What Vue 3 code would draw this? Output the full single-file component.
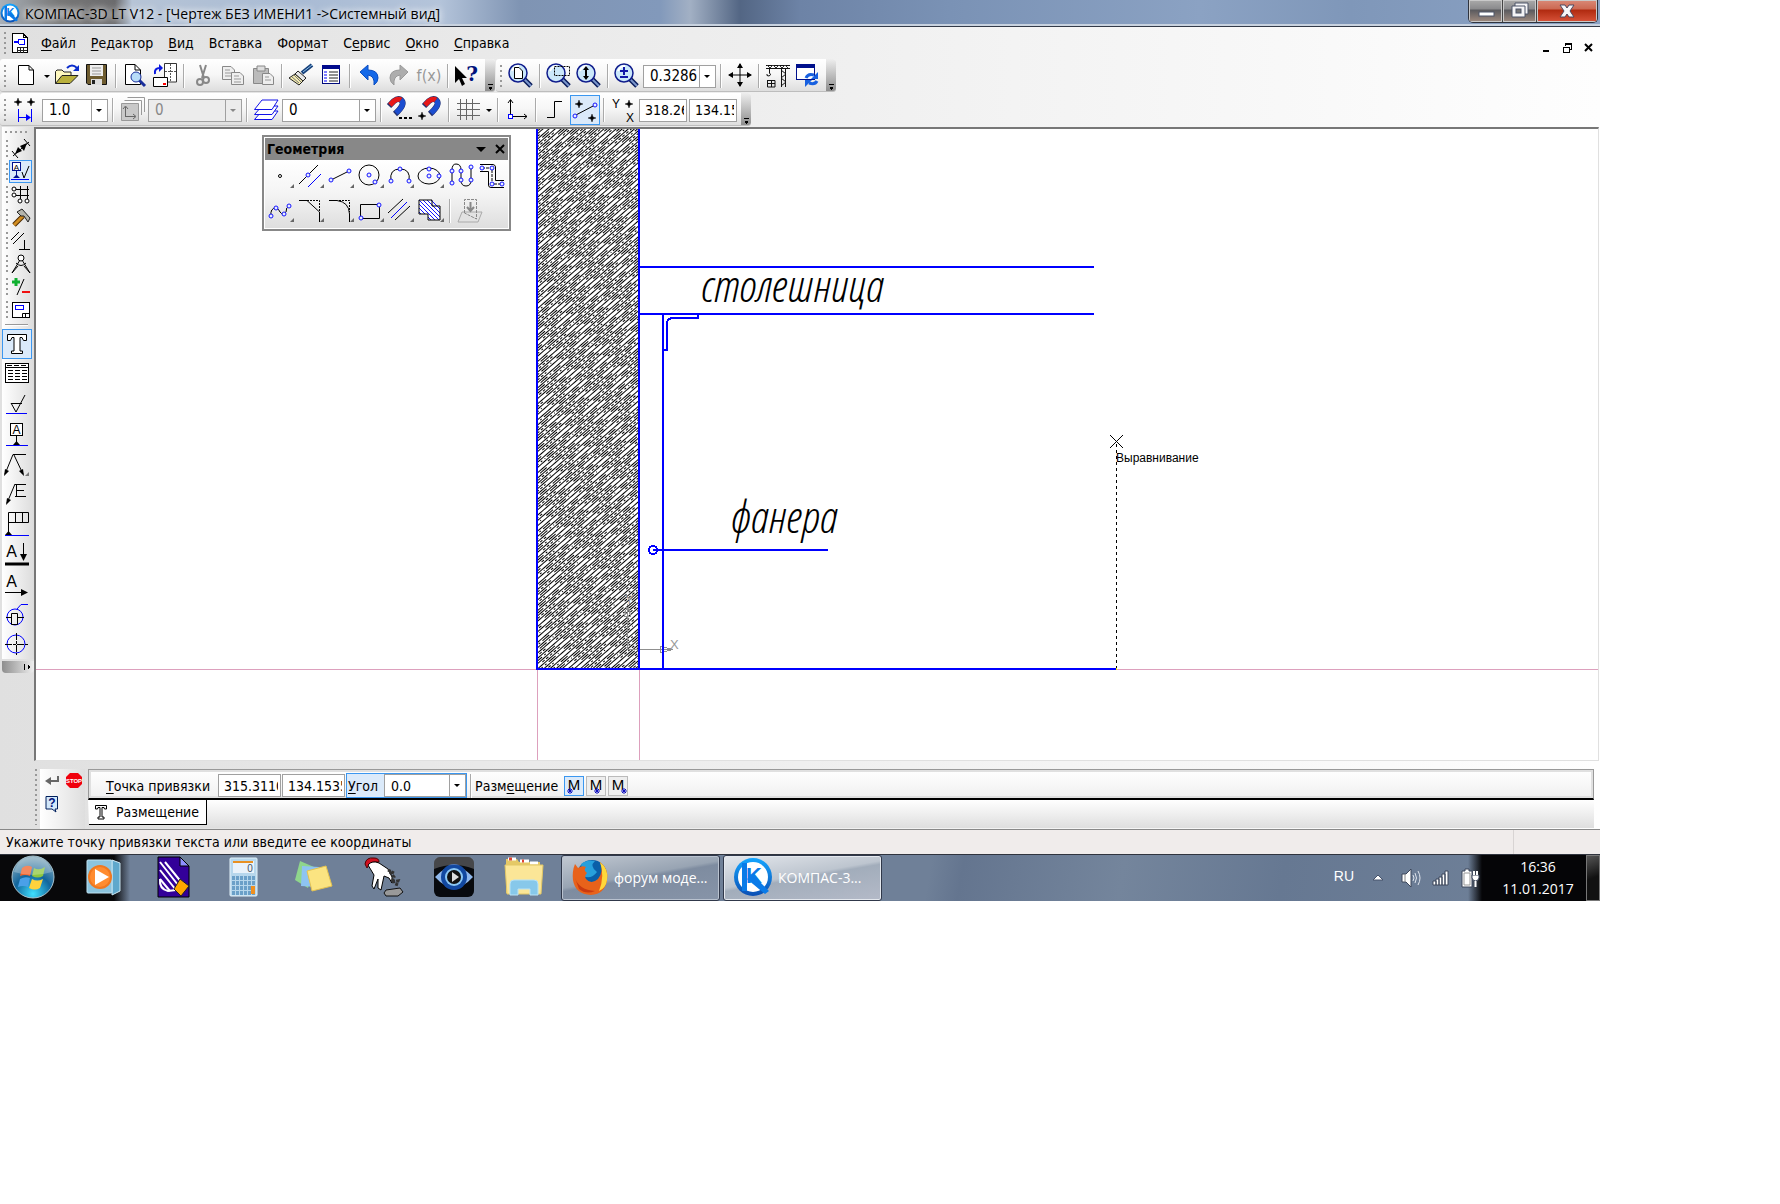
<template>
  <div class="window">
    <header class="titlebar">
      <svg class="titlebar__logo" width="20" height="20" viewBox="0 0 40 40" v-html="kompasLogo"></svg>
      <h1 class="titlebar__text">КОМПАС-3D LT V12 - [Чертеж БЕЗ ИМЕНИ1 -&gt;Системный вид]</h1>
      <div class="titlebar__controls">
        <button class="control" type="button" aria-label="Свернуть">
          <svg width="20" height="20"><rect x="3" y="11" width="15" height="4" fill="#fff" stroke="#4c5468" /></svg>
        </button>
        <button class="control" type="button" aria-label="Развернуть">
          <svg width="20" height="20">
            <path d="M5 2H18V13H15V16H2V5H5Z" fill="#f4f4f6" stroke="#4c5468" />
            <path d="M5 5H15V13" fill="none" stroke="#4c5468" />
            <rect x="6" y="8" width="5" height="4" fill="#777" stroke="#4c5468" />
          </svg>
        </button>
        <button class="control control--close" type="button" aria-label="Закрыть">
          <svg width="20" height="20">
            <path d="M3 4H8L10 7L12 4H17L13 10L17 16H12L10 13L8 16H3L7 10Z" fill="#f6f6f8" stroke="#4c4860" />
          </svg>
        </button>
      </div>
    </header>

    <nav class="menu">
      <i class="grip"></i>
      <svg class="menu__icon" width="18" height="22" shape-rendering="crispEdges">
        <path d="M1.500 1.500H12L16.500 6V20.500H1.500Z" fill="#fff" stroke="#000" />
        <path d="M12.500 1V5.500H17" fill="none" stroke="#000" />
        <path d="M3 9.500H7M7.500 7V12M8 7.500H13V12.500H8M3 10.500H8" fill="none" stroke="#00f" />
        <path d="M6 15.500H16M6 18.500H16M6.500 15V21M9.500 15V21M12.500 15V21" fill="none" stroke="#222" />
      </svg>
      <button v-for="item in menu" :key="item[1] + item[2]" class="menu__item" type="button">{{ item[0] }}<u>{{ item[1] }}</u>{{ item[2] }}</button>
      <div class="menu__doc">
        <button type="button" aria-label="Свернуть документ">
          <svg width="12" height="12"><path d="M3 9H9" stroke="#000" stroke-width="2" /></svg>
        </button>
        <button type="button" aria-label="Восстановить документ">
          <svg width="12" height="12" shape-rendering="crispEdges">
            <path d="M4 4V2H10V7H8M4 1.500H11M2 5H8V10H2ZM1.500 5H8" fill="none" stroke="#000" stroke-width="1" />
          </svg>
        </button>
        <button type="button" aria-label="Закрыть документ">
          <svg width="12" height="12"><path d="M3 2L10 9M10 2L3 9" stroke="#000" stroke-width="2" /></svg>
        </button>
      </div>
    </nav>

    <div class="toolbars">
      <div class="toolbar-row">
        <div class="toolbar">
          <i class="grip"></i>
          <template v-for="(tool, i) in standardTools" :key="i">
            <i v-if="tool === '|'" class="separator"></i>
            <button v-else-if="tool === 'v'" class="arrow" type="button" aria-label="Ещё"></button>
            <button v-else class="tool" type="button" :aria-label="tool.label">
              <svg width="30" height="28" v-html="tool.svg"></svg>
            </button>
          </template>
          <i class="tail"></i>
        </div>
        <div class="toolbar toolbar--view">
          <i class="grip"></i>
          <button v-for="tool in viewTools.slice(0, 1)" :key="tool.label" class="tool" type="button" :aria-label="tool.label">
            <svg width="30" height="28" v-html="tool.svg"></svg>
          </button>
          <i class="separator"></i>
          <button v-for="tool in viewTools.slice(1, 3)" :key="tool.label" class="tool" type="button" :aria-label="tool.label">
            <svg width="30" height="28" v-html="tool.svg"></svg>
          </button>
          <i class="separator"></i>
          <button class="tool" type="button" :aria-label="viewTools[3].label">
            <svg width="30" height="28" v-html="viewTools[3].svg"></svg>
          </button>
          <span class="combo combo--zoom">
            <select aria-label="Масштаб"><option>0.3286</option></select>
          </span>
          <i class="separator"></i>
          <button class="tool" type="button" :aria-label="viewTools[4].label">
            <svg width="30" height="28" v-html="viewTools[4].svg"></svg>
          </button>
          <i class="separator"></i>
          <button v-for="tool in viewTools.slice(5)" :key="tool.label" class="tool" type="button" :aria-label="tool.label">
            <svg width="30" height="28" v-html="tool.svg"></svg>
          </button>
          <i class="tail"></i>
        </div>
      </div>

      <div class="toolbar-row">
        <div class="toolbar">
          <i class="grip"></i>
          <button class="tool" type="button" aria-label="Шаг курсора"><svg width="30" height="28" v-html="stateIcons.step"></svg></button>
          <span class="combo combo--step"><select aria-label="Шаг"><option>1.0</option></select></span>
          <i class="separator"></i>
          <button class="tool" type="button" disabled aria-label="Виды"><svg width="30" height="28" v-html="stateIcons.views"></svg></button>
          <span class="combo combo--wide combo--disabled"><select disabled aria-label="Текущий вид"><option>0</option></select></span>
          <i class="separator"></i>
          <button class="tool" type="button" aria-label="Слои"><svg width="30" height="28" v-html="stateIcons.layers"></svg></button>
          <span class="combo combo--wide"><select aria-label="Текущий слой"><option>0</option></select></span>
          <i class="separator"></i>
          <button class="tool" type="button" aria-label="Настройка привязок"><svg width="30" height="28" v-html="stateIcons.magnet"></svg></button>
          <button class="tool" type="button" aria-label="Запретить привязки"><svg width="30" height="28" v-html="stateIcons.magnetOff"></svg></button>
          <i class="separator"></i>
          <button class="tool" type="button" aria-label="Сетка"><svg width="30" height="28" v-html="stateIcons.grid"></svg></button>
          <button class="arrow" type="button" aria-label="Параметры сетки"></button>
          <i class="separator"></i>
          <button class="tool" type="button" aria-label="Локальная СК"><svg width="30" height="28" v-html="stateIcons.axes"></svg></button>
          <i class="separator"></i>
          <button class="tool" type="button" aria-label="Ортогональное черчение"><svg width="30" height="28" v-html="stateIcons.ortho"></svg></button>
          <button class="tool tool--active" type="button" aria-label="Округление"><svg width="30" height="28" v-html="stateIcons.snap"></svg></button>
          <i class="separator"></i>
          <svg width="30" height="28" v-html="stateIcons.coords"></svg>
          <input class="field field--coord" value="318.2653" aria-label="Координата X" />
          <input class="field field--coord" value="134.1535" aria-label="Координата Y" />
          <i class="tail"></i>
        </div>
      </div>
    </div>

    <main class="workspace">
      <aside class="side">
        <i class="side__dots"></i>
        <div v-for="(tool, i) in panels" :key="tool.label" class="side__row">
          <i class="side__grip"></i>
          <button class="panel-btn" :class="{ 'panel-btn--active': i === 1 }" type="button" :aria-label="tool.label">
            <svg width="21" height="21" v-html="tool.svg"></svg>
          </button>
        </div>
        <i class="side__line"></i>
        <button
          v-for="(tool, i) in notation"
          :key="tool.label"
          class="note-btn"
          :class="{ 'note-btn--active': i === 0 }"
          type="button"
          :aria-label="tool.label"
        >
          <svg width="30" height="30" v-html="tool.svg"></svg>
        </button>
        <i class="side__tail"></i>
      </aside>

      <section class="canvas">
        <svg class="drawing" width="100%" height="631">
          <defs>
            <pattern id="hatch" width="37" height="28" patternUnits="userSpaceOnUse" patternTransform="rotate(-41)" shape-rendering="crispEdges">
              <rect width="37" height="28" fill="#fff" />
              <path d="M0 1H37M0 5H37M0 9H37M0 13H37M0 17H37M0 21H37M0 25H37" stroke="#000" stroke-width="1" />
              <path d="M2 3H37M6 11H34M0 19H30M9 27H37" stroke="#000" stroke-width="1" stroke-dasharray="9 3 2 3" />
              <path d="M0 7H24M12 15H37M3 23H20" stroke="#000" stroke-width="1" stroke-dasharray="3 2" />
            </pattern>
          </defs>
          <g transform="translate(-36 -129)" shape-rendering="crispEdges" fill="none">
            <path d="M36 669.500H537M1117 669.500H4000M537.500 670V800M639.500 670V800" stroke="#dda0bd" />
            <rect x="538" y="120" width="101" height="549" fill="url(#hatch)" />
            <g stroke="#8f8f8f">
              <path d="M627.500 649V607M627 649.500H671" />
              <path d="M627.500 604L624.500 616H630.500ZM673 649.500L660.500 646.500V652.500Z" />
            </g>
            <g stroke="#00f" stroke-width="2">
              <path d="M537 120V670M639 120V669M536 669H1116" />
              <path d="M640 267H1094M640 314H1094M663 314V669" />
              <path d="M664 350H667V324Q667 318 673 318H698V314" />
              <circle cx="653" cy="550" r="4" />
              <path d="M653 550H828" />
            </g>
            <path d="M1116.500 444V668" stroke="#000" stroke-dasharray="3 3" />
            <rect x="1116" y="668" width="1" height="2" fill="#ee0" />
            <path d="M1110 435L1123 448M1123 435L1110 448" stroke="#000" shape-rendering="auto" />
          </g>
          <g transform="translate(-36 -129)">
            <text class="drawing__note" x="700" y="302">столешница</text>
            <text class="drawing__note" x="730" y="533">фанера</text>
            <text class="drawing__hint" x="1116" y="462">Выравнивание</text>
            <text class="drawing__axis" x="670" y="649">X</text>
            <text class="drawing__axis" x="625" y="604">Y</text>
          </g>
        </svg>

        <section class="palette">
          <header class="palette__head">
            <h2>Геометрия</h2>
            <button type="button" aria-label="Меню панели"><svg width="12" height="12"><path d="M1 4H11L6 9Z" /></svg></button>
            <button type="button" aria-label="Закрыть панель"><svg width="12" height="12"><path d="M2 2L10 10M10 2L2 10" stroke="#000" stroke-width="2" /></svg></button>
          </header>
          <div class="palette__grid">
            <template v-for="tool in geometry" :key="tool.label">
              <button class="palette__tool" type="button" :aria-label="tool.label">
                <svg width="30" height="34" v-html="tool.svg"></svg>
              </button>
            </template>
            <i class="separator separator--palette"></i>
            <button class="palette__tool" type="button" disabled aria-label="Спроецировать">
              <svg width="30" height="34" v-html="projection"></svg>
            </button>
          </div>
        </section>
      </section>
    </main>

    <section class="props">
      <i class="grip grip--tall"></i>
      <div class="props__side">
        <button type="button" aria-label="Создать объект">
          <svg width="18" height="18"><path d="M15 4V9H5" fill="none" stroke="#666" stroke-width="2" /><path d="M2 9L8 5V13Z" fill="#666" /></svg>
        </button>
        <button type="button" aria-label="Прервать команду">
          <svg width="18" height="18">
            <path d="M5 1H13L17 5V12L13 16H5L1 12V5Z" fill="#f0000c" />
            <text x="9" y="11" font-family="Liberation Sans, sans-serif" font-size="6" font-weight="bold" fill="#fff" text-anchor="middle">STOP</text>
          </svg>
        </button>
        <button type="button" aria-label="Справка">
          <svg width="18" height="18">
            <path d="M3 1.500H14.500V14H12L13 17L9 14H3Z" fill="#d3e8fa" stroke="#001f5c" />
            <text x="9" y="12" font-family="Liberation Sans, sans-serif" font-size="12" font-weight="bold" fill="#00127a" text-anchor="middle">?</text>
          </svg>
        </button>
      </div>
      <div class="props__body">
        <div class="props__line">
          <label class="props__label" for="px"><u>Т</u>очка привязки</label>
          <input id="px" class="field field--point" value="315.3110" />
          <input class="field field--point" value="134.1535" aria-label="Точка привязки Y" />
          <span class="angle">
            <label for="angle"><u>У</u>гол</label>
            <span class="combo combo--angle"><select id="angle"><option>0.0</option></select></span>
          </span>
          <i class="separator"></i>
          <span class="props__place">Разм<u>е</u>щение</span>
          <button
            v-for="(x, i) in [5, 10, 15]"
            :key="x"
            class="align"
            :class="{ 'align--active': i === 0 }"
            type="button"
            :aria-label="['Слева', 'По центру', 'Справа'][i]"
          >
            <svg width="18" height="18">
              <text x="9" y="13" font-family="Liberation Sans, sans-serif" font-size="15" text-anchor="middle">M</text>
              <path :d="`M${x - 2} 12L${x + 2} 16M${x + 2} 12L${x - 2} 16M${x} 11V17M${x - 3} 14H${x + 3}`" stroke="#1010c0" />
            </svg>
          </button>
        </div>
        <div class="props__tabs">
          <button class="tab" type="button">
            <svg width="14" height="16" viewBox="0 0 28 32">
              <path d="M3 3H25V10H21L20 7H16V26H20V30H8V26H12V7H8L7 10H3Z" fill="#fff" stroke="#000" stroke-width="2" />
            </svg>
            Размещение
          </button>
        </div>
      </div>
    </section>

    <div class="status">
      <p>Укажите точку привязки текста или введите ее координаты</p>
    </div>

    <footer class="taskbar">
      <button class="start" type="button" aria-label="Пуск"><svg width="46" height="46" v-html="orb"></svg></button>
      <button v-for="app in apps" :key="app.label" class="pinned" type="button" :aria-label="app.label">
        <svg width="44" height="44" v-html="app.svg"></svg>
      </button>
      <button class="task" type="button">
        <svg width="38" height="38" v-html="firefox"></svg>
        <span>форум моде...</span>
      </button>
      <button class="task task--active" type="button">
        <svg width="40" height="40" v-html="kompasLogo"></svg>
        <span>КОМПАС-3...</span>
      </button>
      <div class="tray">
        <span class="tray__lang">RU</span>
        <svg class="tray__more" width="12" height="12"><path d="M1 8L6 3L11 8Z" fill="#fff" stroke="#46526a" /></svg>
        <svg width="22" height="22">
          <path d="M2 7H6L11 2V20L6 15H2Z" fill="#fff" stroke="#3c465a" />
          <path d="M5 7V15" stroke="#888" />
          <path d="M13 8Q15 11 13 14M15 6Q18 11 15 16M18 4Q22 11 18 18" fill="none" stroke="#dfe5ee" />
        </svg>
        <svg width="18" height="18">
          <path d="M1 12H4V16H1ZM4 10H7V16H4ZM7 8H10V16H7ZM10 5H13V16H10ZM13 2H16V16H13Z" fill="#fff" stroke="#3c465a" />
        </svg>
        <svg width="20" height="22">
          <path d="M2 4H5V2H9V4H12V20H2Z" fill="#fff" stroke="#3c465a" />
          <path d="M4 6H10V18H4Z" fill="none" stroke="#999" />
          <path d="M12 8H19V11Q18 14 15.500 14Q13 14 12 11Z" fill="#fff" stroke="#3c465a" />
          <path d="M14 4V8M17 4V8M15.500 14V20" stroke="#fff" stroke-width="2" />
        </svg>
        <time class="clock"><span>16:36</span><span>11.01.2017</span></time>
        <button class="peek" type="button" aria-label="Показать рабочий стол"></button>
      </div>
    </footer>
  </div>
</template>

<script setup>
  const menu = [
    ['', 'Ф', 'айл'],
    ['', 'Р', 'едактор'],
    ['', 'В', 'ид'],
    ['Вст', 'а', 'вка'],
    ['Фор', 'м', 'ат'],
    ['С', 'е', 'рвис'],
    ['', 'О', 'кно'],
    ['', 'С', 'правка'],
  ];

  const kompasLogo = `
    <defs><linearGradient id="kl" x1="0" y1="0" x2="0" y2="1"><stop offset="0" stop-color="#15a6ff"/><stop offset="1" stop-color="#0b4fb4"/></linearGradient></defs>
    <circle cx="20" cy="20" r="19" fill="url(#kl)"/>
    <circle cx="20" cy="20" r="15" fill="#fff"/>
    <path d="M9 6H14V34H9ZM20 18L36 34L32 37L14 22Z" fill="#0a7be8"/>
    <text x="21" y="26" font-family="Liberation Sans, sans-serif" font-size="22" font-weight="bold" fill="#0a7be8" text-anchor="middle">K</text>`;

  // Magnifier shared by every zoom command
  const lens = (inner) => `
    <path d="M18 17L25 24" stroke="#0a1c5c" stroke-width="5"/>
    <path d="M18 17L25 24" stroke="#7b97cc" stroke-width="2"/>
    <circle cx="12" cy="11" r="9" fill="#cbe8fa" stroke="#101c8c" stroke-width="1.500"/>
    <path d="M6 9Q8 4 13 4" stroke="#fff" stroke-width="2" fill="none"/>${inner}`;

  const line = (d, color = '#000', width = 1) => `<path d="${d}" fill="none" stroke="${color}" stroke-width="${width}"/>`;
  const dot = (x, y) => `<circle cx="${x}" cy="${y}" r="2" fill="#e8eeff" stroke="#1515ff"/>`;
  const letter = (char, x, y, size) =>
    `<text x="${x}" y="${y}" font-family="Liberation Sans, sans-serif" font-size="${size}" text-anchor="middle">${char}</text>`;

  const standardTools = [
    { label: 'Создать', svg: '<path d="M7.500 3.500H18L22.500 8V22.500H7.500Z" fill="#fff" stroke="#000"/><path d="M18 3.500V8H22.500" fill="none" stroke="#000"/>' },
    'v',
    { label: 'Открыть', svg: '<path d="M3.500 21.500V9.500L5 8H10L12 10H19V13" fill="#fff9c0" stroke="#222"/><path d="M3.500 21.500L10 13.500H26L18 21.500Z" fill="#b9b03c" stroke="#222"/><path d="M15 6Q20 1 25 6" fill="none" stroke="#0a2ccc" stroke-width="2"/><path d="M27 3V9H21Z" fill="#0a2ccc"/>' },
    { label: 'Сохранить', svg: '<path d="M4.500 2.500H24.500V22.500H6L4.500 21Z" fill="#6e5c30" stroke="#111"/><rect x="8" y="3" width="13" height="11" fill="#eee"/><path d="M10 6H19M10 9H19M10 12H19" stroke="#999"/><rect x="9" y="17" width="11" height="6" fill="#ddd"/><rect x="10" y="18" width="3" height="4" fill="#222"/>' },
    '|',
    { label: 'Предварительный просмотр', svg: '<path d="M5.500 2.500H15L20.500 8V22.500H5.500Z" fill="#fff" stroke="#000"/><path d="M15 2.500V8H20.500" fill="none" stroke="#000"/><path d="M19 18L25 24" stroke="#1a2f9c" stroke-width="3"/><circle cx="16" cy="15" r="5" fill="#b8dcf8" stroke="#1a2f9c"/>' },
    { label: 'Печать', svg: '<path d="M14.500 1.500H26.500V20H14.500Z" fill="#fff" stroke="#333"/><path d="M20.500 2V19M15 9.500H26" stroke="#555" stroke-dasharray="2 1"/><path d="M3.500 15.500H17.500V24.500H3.500Z" fill="#fff" stroke="#000"/><path d="M13 22H16" stroke="red" stroke-width="2"/><path d="M5 12Q4 6 10 6" fill="none" stroke="#0a18e0" stroke-width="2"/><path d="M9 2V10L13 6Z" fill="#0a18e0"/>' },
    '|',
    { label: 'Вырезать', svg: '<path d="M12 3L16 16M18 3L14 16" stroke="#888" stroke-width="2"/><circle cx="12" cy="20" r="3" fill="none" stroke="#888" stroke-width="2"/><circle cx="18" cy="18" r="3" fill="none" stroke="#888" stroke-width="2"/>' },
    { label: 'Копировать', svg: '<path d="M4.500 4.500H13L16.500 8V17.500H4.500Z" fill="#eee" stroke="#888"/><path d="M7 8H12M7 11H14M7 14H14" stroke="#999"/><path d="M13.500 10.500H22L25.500 14V22.500H13.500Z" fill="#eee" stroke="#888"/><path d="M16 14H21M16 17H23M16 20H23" stroke="#999"/>' },
    { label: 'Вставить', svg: '<path d="M5.500 6.500H20.500V21.500H5.500Z" fill="#bbb" stroke="#888"/><path d="M9 4H17V9H9Z" fill="#ddd" stroke="#888"/><path d="M14.500 11.500H22L25.500 15V22.500H14.500Z" fill="#eee" stroke="#888"/><path d="M17 15H21M17 18H23" stroke="#999"/>' },
    '|',
    { label: 'Копировать свойства', svg: '<path d="M16 11L26 3" stroke="#16407a" stroke-width="4"/><path d="M17 10L26 3" stroke="#8fc0ea" stroke-width="1"/><path d="M12 9L20 16L17 19L9 12Z" fill="#e8e8e8" stroke="#222"/><path d="M9 12L17 19L13 23L3 16Z" fill="#f4ecb0" stroke="#222"/><path d="M6 15L13 21M8 13L15 20" stroke="#777"/>' },
    { label: 'Свойства', svg: '<rect x="6.500" y="3.500" width="17" height="18" fill="#fff" stroke="#000a7c"/><rect x="6" y="3" width="18" height="4" fill="#000a8c"/><path d="M8 10H11M8 13H11M8 16H11M8 19H11" stroke="#00f"/><path d="M13 10H22M13 13H22M13 16H22M13 19H22" stroke="#222"/>' },
    '|',
    { label: 'Отменить', svg: '<path d="M6 10L14 3V8Q24 8 24 16Q24 20 20 23Q21 14 14 13V18Z" fill="#1468e8" stroke="#0a4cc0"/>' },
    { label: 'Повторить', svg: '<path d="M24 10L16 3V8Q6 8 6 16Q6 20 10 23Q9 14 16 13V18Z" fill="#adadad" stroke="#999"/>' },
    { label: 'Переменные', svg: '<text x="15" y="19" font-family="DejaVu Sans Condensed, sans-serif" font-size="16" fill="#989898" text-anchor="middle">f(x)</text>' },
    '|',
    { label: 'Справка', svg: '<path d="M3 4V21L7 17L10 24L13 22L10 16H15Z" fill="#000"/><text x="20" y="19" font-family="DejaVu Serif, serif" font-size="20" font-weight="bold" fill="#00127c" text-anchor="middle">?</text>' },
  ];

  const viewTools = [
    { label: 'Масштаб по листу', svg: lens('<path d="M8.500 5.500H13L16.500 9V16.500H8.500Z" fill="#fff" stroke="#000"/>') },
    { label: 'Увеличить рамкой', svg: lens('<path d="M10.500 4.500H25.500V13.500H10.500Z" fill="none" stroke="#000" stroke-dasharray="2 1"/>') },
    { label: 'Приблизить', svg: lens('<path d="M12 6V16" stroke="#000" stroke-width="2"/><path d="M12 4L15 8H9ZM12 18L15 14H9Z" fill="#000"/>') },
    { label: 'Масштаб', svg: lens('<path d="M12 5V13M8 9H16M8 15H16" stroke="#1218a8" stroke-width="2"/>') },
    { label: 'Сдвинуть', svg: `${line('M15 2V24M4 13H26', '#000', 1)}<path d="M15 1L18 6H12ZM15 25L18 20H12ZM3 13L8 10V16ZM27 13L22 10V16Z"/>` },
    { label: 'Перестроить', svg: `${line('M3 3.500H27M3 6.500H27', '#111', 1)}${line('M4 3L7 6L10 3L13 6L16 3L19 6L22 3L25 6', '#333')}${line('M18.500 6V25M22.500 6V25M18 8L23 12L18 16L23 20L18 24', '#111')}${line('M6.500 7V11Q9 13 6 14Q3 14 4 12', '#111')}${line('M4 18.500H12V25H4.500V18M8.500 18V25M4 21.500H12', '#111')}` },
    { label: 'Обновить изображение', svg: '<rect x="3.500" y="2.500" width="18" height="15" fill="#fff" stroke="#00108c"/><rect x="3" y="2" width="19" height="4" fill="#00108c"/><path d="M13 16Q15 11 21 13" fill="none" stroke="#1760e0" stroke-width="3"/><path d="M25 10V17H18Z" fill="#1760e0"/><path d="M24 19Q22 23 16 21" fill="none" stroke="#1760e0" stroke-width="3"/><path d="M12 25V18H19Z" fill="#1760e0"/>' },
  ];

  const star = (x, y) =>
    `<path d="M${x} ${y - 4}L${x + 1} ${y - 1}L${x + 4} ${y}L${x + 1} ${y + 1}L${x} ${y + 4}L${x - 1} ${y + 1}L${x - 4} ${y}L${x - 1} ${y - 1}Z" fill="#000" stroke="#000" stroke-width=".4"/>`;
  const horseshoe = '<path d="M4 10L9 5Q14 1 17 5Q20 9 10 18" fill="none" stroke="#22306e" stroke-width="6"/><path d="M5 9L9 5Q13 2 16 4" fill="none" stroke="#e81818" stroke-width="5"/><path d="M16 4Q21 8 11 17" fill="none" stroke="#1c4ed0" stroke-width="5"/>';

  const stateIcons = {
    step: `${star(7, 6)}${star(20, 6)}${line('M7.500 13V26M20.500 13V26M8 21.500H18', '#00f')}<path d="M20 21.500L15 18V25Z" fill="#00f"/>`,
    views: '<path d="M10.500 1.500H27.500V16M7.500 4.500H24.500V19" fill="none" stroke="#999"/><path d="M4.500 7.500H21.500V24.500H4.500Z" fill="#c9c9c9" stroke="#999"/><path d="M8.500 20V11M8 20.500H18M6 13L8.500 10L11 13M16 18L19 20.500L16 23" fill="none" stroke="#666"/>',
    layers: `<g fill="#fff" stroke="#1212e8"><path d="M3.500 23.500L11 15H27L21 23.500Z"/><path d="M3.500 18.500L11 10H27L21 18.500Z"/><path d="M3.500 13.500L11 4H27L21 13.500Z"/></g>`,
    magnet: `${horseshoe}<path d="M14 21H17V23H14ZM19 21H22V23H19ZM24 21H27V23H24Z"/>`,
    magnetOff: `<g transform="translate(5 0)">${horseshoe}</g>${star(7, 20)}`,
    grid: line('M7.500 3V24M13.500 3V24M19.500 3V24M4 7.500H27M4 13.500H27M4 19.500H27', '#666'),
    axes: `${line('M8.500 18V4M10 20.500H25M6 7L8.500 3.500L11 7M22 18L25 20.500L22 23')}<rect x="6.500" y="18.500" width="4" height="4" fill="#fff" stroke="#00f"/>`,
    ortho: line('M7 21.500H14.500V5.500H22'),
    snap: `${line('M4 20L25 9')}${dot(5, 20)}${dot(25, 9)}${star(9, 8)}${star(22, 22)}`,
    coords: `${letter('Y', 8, 12, 12)}${letter('X', 22, 26, 12)}${star(21, 8)}`,
  };

  const panels = [
    { label: 'Размеры', svg: `${line('M3 18L19 4M2 13L8 20M14 1L20 8')}<path d="M5 16L12 13L8 9ZM17 5L10 8L14 13Z"/>` },
    { label: 'Обозначения', svg: `<rect x="2.500" y="1.500" width="8" height="8" fill="#fff" stroke="#00108c"/>${letter('A', 6.500, 9, 8)}<path d="M6 10H7V14L10 17H3L6 14Z" fill="#00108c"/>${line('M1 18.500H19', '#00f')}${line('M12 11L14 17L19 5')}` },
    { label: 'Параметризация', svg: `${line('M6 5.500H19M6 11.500H19M10.500 2V15M17.500 2V15')}<g fill="#fff" stroke="#000"><circle cx="4" cy="5" r="2"/><circle cx="4" cy="11" r="2"/><circle cx="10" cy="17" r="2"/><circle cx="17" cy="17" r="2"/></g>` },
    { label: 'Редактирование', svg: '<path d="M4 18L13 9" stroke="#4c2a00" stroke-width="5"/><path d="M4 18L13 9" stroke="#d08c20" stroke-width="3"/><path d="M7 5L12 2L20 11L18 15L14 9L11 9Z" fill="#b5b5ac" stroke="#222"/>' },
    { label: 'Измерения', svg: line('M1 10L9 2M3 14L14 3M14.500 10V19M9 19.500H20') },
    { label: 'Чертёжные приёмы', svg: `${line('M10 7L2 20L8 13M12 7L20 20L14 13M6 10Q11 15 16 10')}<circle cx="11" cy="5" r="3" fill="#fff" stroke="#000"/>` },
    { label: 'Спецификация', svg: `${line('M2 6H10M6 2V10', '#10b030', 3)}${line('M7 19L14 3')}${line('M12 16H20', '#f01010', 2)}` },
    { label: 'Отчёты', svg: `<rect x="2.500" y="3.500" width="17" height="15" fill="#fff" stroke="#000"/><rect x="5.500" y="6.500" width="8" height="4" fill="none" stroke="#00f"/>${line('M12.500 18V14.500H19M15.500 15V18')}` },
  ];

  const notation = [
    { label: 'Ввод текста', svg: '<path d="M5.500 5.500H24.500V11.500H21.500L20 8.500H18V22H20.500V24.500H9.500V22H12V8.500H10L8.500 11.500H5.500Z" fill="#fff" stroke="#000"/>' },
    { label: 'Ввод таблицы', svg: `<rect x="3.500" y="4.500" width="23" height="19" fill="#fff" stroke="#000" stroke-width="1"/>${line('M3 8.500H27')}<path d="M5 6.500H25M6 11.500H25M6 14.500H25M6 17.500H25M6 20.500H25" stroke="#000" stroke-dasharray="5 2"/>` },
    { label: 'Шероховатость', svg: `${line('M9 14.500H20M9 14L14 23L23 6')}${line('M4 24.500H25', '#00f')}` },
    { label: 'База', svg: `<rect x="8.500" y="4.500" width="12" height="12" fill="#fff" stroke="#000"/>${letter('A', 14.500, 15, 12)}${line('M14.500 17V24')}<path d="M11 26L14.500 22L18 26Z"/>${line('M4 26.500H26', '#00f')}` },
    { label: 'Линия-выноска', svg: `${line('M24 5.500H11L3 25M12 6L21 25')}<path d="M2 27L3 20L7 22ZM22 27L17 22L21 20Z"/><path d="M27 23V27H23Z" fill="#777"/>` },
    { label: 'Обозначение позиций', svg: `${line('M5 24L13 5')}<path d="M4 26L5 19L9 21Z"/>${line('M13 5.500H24M14 11.500H22M13 17.500H24M14.500 5V18')}` },
    { label: 'Допуск формы', svg: `${line('M6.500 3.500H26.500V13.500H6.500ZM13.500 3V13M20.500 3V13M6.500 13V25')}<path d="M3 26L6.500 22L10 26Z"/>${line('M3 26.500H27', '#00f')}` },
    { label: 'Линия разреза', svg: `${letter('A', 9.500, 18, 16)}${line('M21.500 4V18')}<path d="M21.500 22L18 15H25Z"/>${line('M3 25H27', '#000', 3)}` },
    { label: 'Стрелка взгляда', svg: `${letter('A', 9.500, 18, 16)}${line('M3 23.500H22')}<path d="M26 23.500L19 20V27Z"/>` },
    { label: 'Выносной элемент', svg: `<circle cx="13" cy="18" r="8" fill="none" stroke="#00f"/>${line('M15 10L19 5.500H26', '#00f')}${line('M4 18.500H10M15 18.500H22M9.500 14.500H15.500V25.500H9.500Z')}` },
    { label: 'Автоосевая', svg: `<circle cx="14" cy="15" r="9" fill="none" stroke="#00f"/><path d="M14.500 4V26M3 15.500H26" stroke="#000" stroke-dasharray="7 1 3 1"/>` },
  ];

  const corner = '<path d="M29 24V28H25Z" fill="#666"/>';
  const geometry = [
    { label: 'Точка', svg: `<circle cx="15" cy="16" r="1.500" fill="#fff" stroke="#000"/>${corner}` },
    { label: 'Вспомогательная прямая', svg: `${line('M4 24L23 5')}${line('M13 27L26 14', '#00f')}${dot(13, 15)}${corner}` },
    { label: 'Отрезок', svg: `${line('M6 20L24 11')}${dot(6, 20)}${dot(24, 11)}${corner}` },
    { label: 'Окружность', svg: `<circle cx="14" cy="15" r="10" fill="none" stroke="#000"/>${dot(14, 15)}${dot(20, 22)}${corner}` },
    { label: 'Дуга', svg: `${line('M6 21Q4 9 15 9Q26 9 24 21')}${dot(6, 21)}${dot(15, 9)}${dot(24, 21)}${corner}` },
    { label: 'Эллипс', svg: `<ellipse cx="14" cy="16" rx="11" ry="8" fill="none" stroke="#000"/>${dot(14, 16)}${dot(14, 9)}${dot(24, 16)}${corner}` },
    { label: 'Непрерывный ввод', svg: `${line('M7 23V10Q7 4 11 4Q16 4 16 10V20Q16 26 21 26Q26 26 26 20V7')}${dot(7, 23)}${dot(7, 11)}${dot(16, 11)}${dot(16, 20)}${dot(26, 20)}${dot(26, 7)}` },
    { label: 'Линия', svg: `${line('M5 4.500H18Q20.500 5 20.500 7V20.500H29M5 11.500H13.500V25Q13.500 27.500 16 27.500H29')}<path d="M7 8H17V24H27" fill="none" stroke="#000" stroke-dasharray="3 1"/>${dot(7, 8)}${dot(17, 8)}${dot(17, 24)}${dot(27, 24)}` },
    { label: 'Кривая Безье', svg: `${line('M6 22Q5 14 11 14Q14 15 15 18Q18 22 21 18Q21 13 24 12')}${dot(6, 22)}${dot(11, 14)}${dot(19, 20)}${dot(24, 12)}${corner}` },
    { label: 'Фаска', svg: `${line('M4 6.500H12L24.500 18V28')}<path d="M12 6.500H24.500V18" fill="none" stroke="#000" stroke-dasharray="2 1"/>${corner}` },
    { label: 'Скругление', svg: `${line('M4 6.500H12Q24 8 24.500 20V28')}<path d="M14 6.500H24.500V18" fill="none" stroke="#000" stroke-dasharray="2 1"/>${corner}` },
    { label: 'Прямоугольник', svg: `${line('M5.500 10.500H24.500V24.500H5.500Z')}${dot(6, 24)}${dot(24, 11)}${corner}` },
    { label: 'Эквидистанта', svg: `${line('M3 19L18 5M10 26L25 12')}${line('M6 24L22 8', '#00f')}${corner}` },
    { label: 'Штриховка', svg: `<path d="M4 6H17V12H25V26H13V20H4Z" fill="#fff"/>${line('M4 10L14 20M4 14L10 20M4 18L6 20M4 6L24 26M8 6L25 23M12 6L25 19M16 6L25 15M13 19L20 26M13 23L16 26', '#1515ff')}${line('M4 6H17V12H25V26H13V20H4Z')}${corner}` },
  ];
  const projection = '<path d="M7 18H27L23 28H3Z" fill="#e2e2e2" stroke="#aaa"/><path d="M9.500 19V5.500H21.500V25L9.500 19" fill="none" stroke="#888" stroke-dasharray="3 1"/><path d="M15.500 8V16M12 13L15.500 17L19 13" fill="none" stroke="#888" stroke-width="2"/>';

  const orb = `
    <defs><radialGradient id="orb" cx=".5" cy=".9" r=".9"><stop offset="0" stop-color="#3fe0ff"/><stop offset=".5" stop-color="#12659c"/><stop offset="1" stop-color="#8fb0bf"/></radialGradient></defs>
    <circle cx="23" cy="23" r="21" fill="url(#orb)" stroke="#a9c3cf"/>
    <path d="M12 14Q17 10 22 13L20 22Q15 20 10 22Z" fill="#f0622a"/>
    <path d="M24 14Q29 17 35 13L33 22Q28 25 22 22Z" fill="#8cc63e"/>
    <path d="M10 25Q15 22 20 24L18 33Q13 31 8 33Z" fill="#4aa0e8"/>
    <path d="M22 25Q27 28 33 25L30 34Q25 37 19 34Z" fill="#ffd23c"/>
    <path d="M4 18Q8 3 23 3Q38 3 42 18Q23 24 4 18Z" fill="#fff" opacity=".25"/>`;

  const firefox = `
    <circle cx="21" cy="17" r="15" fill="#0a5fa8"/>
    <path d="M10 6Q16 1 24 3Q18 8 26 14Q20 22 12 18Z" fill="#27a0dc"/>
    <path d="M29 4Q38 11 36 22Q34 36 20 37Q4 36 2 22Q1 13 4 6L7 10Q11 7 15 9Q12 12 16 15Q13 18 15 21Q20 27 27 21Q33 14 29 4Z" fill="#e8621a"/>
    <path d="M29 4Q38 11 36 22Q35 30 28 33Q34 18 29 4Z" fill="#ffd83a"/>
    <path d="M4 20Q8 32 24 33Q15 37 8 31Z" fill="#c93a10"/>`;

  const apps = [
    { label: 'Windows Media', svg: '<path d="M30 5L38 8V36L30 40Z" fill="#5fa8cc" stroke="#cfeaf6"/><rect x="5" y="5" width="25" height="33" rx="1" fill="#8cc4de" stroke="#bfe2f2"/><circle cx="18" cy="22" r="12" fill="#f07820"/><circle cx="18" cy="22" r="10" fill="#ff8c30"/><path d="M13 14L27 22L13 30Z" fill="#fff"/>' },
    { label: 'Scrapbook', svg: '<path d="M6 2H28L37 11V42H6Z" fill="#330099" stroke="#000"/><path d="M28 2V11H37Z" fill="#8f8fff" stroke="#000"/><path d="M8 7L26 30M8 15L24 35M8 24L18 36M13 7L30 28" stroke="#fff" stroke-width="2"/><path d="M8 24Q7 34 16 36L24 35" stroke="#fff" stroke-width="2" fill="none"/><path d="M28 24L37 31L29 41L22 34Z" fill="#ffa600" stroke="#222"/>' },
    { label: 'Калькулятор', svg: '<rect x="8" y="3" width="27" height="38" rx="1" fill="#b7d7ec" stroke="#e4f2fa"/><rect x="11" y="6" width="21" height="12" fill="#e9f2fa"/><path d="M11 7H31" stroke="#e89020" stroke-width="2"/><text x="28" y="17" font-family="Liberation Sans, sans-serif" font-size="10" fill="#456" text-anchor="middle">0</text><path d="M10 23H33M10 28H33M10 33H33M10 38H33" stroke="#6ba0c8" stroke-width="4" stroke-dasharray="3 1"/><rect x="29" y="31" width="4" height="8" fill="#f09020"/>' },
    { label: 'Записки', svg: '<path d="M8 6L22 12L16 33L3 25Z" fill="#8fd68c"/><path d="M10 11L27 12L25 32L9 31Z" fill="#8ec4f2"/><path d="M15 16L34 11L40 31L20 36Z" fill="#fbe481" stroke="#e4c250"/>' },
    { label: 'Hand', svg: '<path d="M3 9Q4 2 12 3Q17 3 17 7Q8 6 5 13Z" fill="#d01020" stroke="#500"/><path d="M6 10Q10 5 17 8L26 14L30 22V28L27 23L22 21L19 35L16 33V24L12 34L10 31L12 20Z" fill="#fff" stroke="#000"/><path d="M28 17L32 22L30 27L36 26L34 31M26 15L32 18" stroke="#333" stroke-width="3" fill="none" stroke-dasharray="3 1"/><path d="M24 35L38 33L41 37L36 41H24L22 38Z" fill="#999" stroke="#111"/>' },
    { label: 'Плеер', svg: '<rect x="2" y="2" width="40" height="40" rx="6" fill="#080a0e"/><path d="M3 22Q22 1 41 22Q22 43 3 22Z" fill="#8fb8ec"/><circle cx="22" cy="22" r="13" fill="#1248a0"/><circle cx="22" cy="22" r="9" fill="#8cc8f4"/><circle cx="22" cy="22" r="7" fill="#111"/><path d="M20 17L27 22L20 27Z" fill="#ddd"/><path d="M2 14V8Q2 2 8 2H36Q42 2 42 8V14Q22 6 2 14Z" fill="#fff" opacity=".25"/>' },
    { label: 'Проводник', svg: '<path d="M4 4H15L17 7H38V38H4Z" fill="#e5c966"/><path d="M6 4H14M18 6H27M28 8H36" stroke="#fff" stroke-width="3"/><path d="M7 4H10M20 6H22" stroke="#d43" stroke-width="3"/><path d="M3 10H41L39 39H5Z" fill="#fbe697" stroke="#e2c766"/><path d="M8 40V29Q8 25 12 25H32Q36 25 36 29V40H28V34H16V40Z" fill="#87c8ea" stroke="#b8e2f6"/>' },
  ];
</script>

<style>
  body {
    margin: 0;
    background: #fff;
  }
</style>

<style scoped>
  * {
    box-sizing: border-box;
  }

  .window {
    margin-right: 180px;
    font-family: 'DejaVu Sans Condensed', 'Noto Sans', sans-serif;
    font-size: 14px;
    color: #000;
    background: linear-gradient(90deg, #e0e0e0, #fefefe);
  }

  button {
    display: flex;
    align-items: center;
    justify-content: center;
    padding: 0;
    border: 0;
    background: none;
    font: inherit;
    color: inherit;
  }

  svg {
    display: block;
    flex: none;
  }

  .titlebar {
    display: flex;
    align-items: center;
    height: 27px;
    border-bottom: 1px solid #333a48;
    background: linear-gradient(90deg, #a9b0b8 0, #777 60px, #6b6b6d 115px, #b6c4d6 132px, #a9bbd4 300px, #b4c4da 440px, #7f94b3 520px, #8299bb 660px, #a2b0c4 690px, #536684 740px, #6d83a6 800px, #7a92b5 950px, #8ba2c3 1200px, #7f97b9 1350px, #8ca3c5);
    box-shadow: inset 0 -2px 0 #c8d2df;
  }

  .titlebar__text {
    margin: 0;
    padding-left: 5px;
    font-family: 'Open Sans', 'Noto Sans', sans-serif;
    font-size: 14px;
    font-weight: 400;
    text-shadow: 0 0 6px #fff, 0 0 8px #fff;
  }

  .titlebar__controls {
    display: flex;
    align-self: flex-start;
    margin: 0 2px 0 auto;
    border: 1px solid #30343e;
    border-top: 0;
    border-radius: 0 0 5px 5px;
    overflow: hidden;
  }

  .control {
    width: 34px;
    height: 22px;
    border-right: 1px solid #444;
    background: linear-gradient(#aaa 0, #8a8a8c 9px, #5a5a5e 10px, #a08c80 100%);
    box-shadow: inset 0 0 0 1px #c9c9c9;
  }

  .control--close {
    width: 60px;
    border-right: 0;
    background: linear-gradient(#d98a78 0, #cc6852 9px, #b02a10 10px, #d8533a 100%);
  }

  .menu {
    display: flex;
    align-items: center;
    height: 32px;
  }

  .menu__icon {
    margin-right: 12px;
  }

  .menu__item {
    margin-right: 15px;
  }

  u {
    text-underline-offset: 2px;
  }

  .menu__doc {
    display: flex;
    gap: 9px;
    margin: 9px 6px 0 auto;
  }

  .grip {
    flex: none;
    width: 11px;
    height: 22px;
    background: repeating-linear-gradient(#999 0 2px, transparent 2px 5px) 4px 0 / 2px 100% no-repeat;
  }

  .toolbar-row {
    display: flex;
    gap: 1px;
    height: 34px;
  }

  .toolbar {
    display: flex;
    align-items: center;
    height: 33px;
    padding-top: 2px;
    border-radius: 3px;
    background: linear-gradient(#fff, #f6f6f6 50%, #dedede);
    border-bottom: 1px solid #bdbdbd;
  }

  .toolbar .combo {
    font-size: 15px;
  }

  .toolbar--view .grip {
    width: 10px;
  }

  .tool {
    width: 30px;
    height: 30px;
  }

  .tool--active {
    border: 1px solid #3b97f0;
    background: #dbeafa;
  }

  .separator {
    flex: none;
    width: 2px;
    height: 24px;
    margin: 0 3px;
    border-left: 1px solid #aaa;
    background: #fff;
  }

  .arrow {
    width: 11px;
    height: 24px;
  }

  .arrow::before,
  .combo::after {
    content: '';
    border: 3px solid transparent;
    border-top-color: #000;
    border-bottom: 0;
  }

  .tail {
    align-self: stretch;
    width: 10px;
    margin: -2px 0 0 3px;
    border-radius: 0 3px 3px 0;
    background:
      linear-gradient(#000, #000) 3px 25px / 5px 1px no-repeat,
      conic-gradient(from -36deg at 50% 100%, #000 72deg, transparent 0) 3px 28px / 5px 3px no-repeat,
      linear-gradient(#eee, #8e8e8e);
  }

  .combo {
    position: relative;
    display: flex;
    align-items: center;
    height: 23px;
    margin: 0 1px;
    border: 1px solid #a0a0a0;
    background: #fff;
  }

  .combo::after {
    position: absolute;
    right: 5px;
    pointer-events: none;
  }

  .combo select {
    appearance: none;
    width: 100%;
    height: 100%;
    padding: 0 18px 0 6px;
    border: 0;
    border-radius: 0;
    background: linear-gradient(#a0a0a0, #a0a0a0) right 15px top / 1px 100% no-repeat;
    font: inherit;
    color: #000;
  }

  .combo--zoom {
    width: 73px;
  }

  .combo--step {
    width: 66px;
  }

  .combo--wide {
    width: 94px;
  }

  .combo--disabled {
    background: #ececec;
  }

  .combo--disabled::after {
    border-top-color: #888;
  }

  .combo--disabled select {
    color: #888;
    opacity: 1;
  }

  .combo--angle {
    width: 82px;
    margin: 0;
  }

  .field {
    height: 23px;
    padding: 0 2px 0 5px;
    border: 1px solid #a0a0a0;
    background: #fff;
    font: inherit;
  }

  .field--coord {
    width: 48px;
    margin: 0 1px;
  }

  .workspace {
    display: flex;
    align-items: stretch;
  }

  .side {
    display: flex;
    flex-direction: column;
    align-items: flex-start;
    width: 32px;
    margin-left: 2px;
    background: linear-gradient(90deg, #fff, #dcdcdc) 0 0 / 100% 532px no-repeat;
  }

  .side__dots {
    width: 24px;
    height: 2px;
    margin: 4px 0 4px 3px;
    background: repeating-linear-gradient(90deg, #999 0 2px, transparent 2px 5px);
  }

  .side__row {
    display: flex;
    align-items: center;
    height: 23px;
  }

  .side__grip {
    width: 2px;
    height: 17px;
    margin: 0 1px 0 4px;
    background: repeating-linear-gradient(#999 0 2px, transparent 2px 5px);
  }

  .panel-btn {
    width: 23px;
    height: 23px;
    border: 1px solid transparent;
  }

  .panel-btn--active,
  .note-btn--active {
    border: 1px solid #3b97f0;
    background: #dbeafa;
  }

  .side__line {
    width: 23px;
    height: 2px;
    margin: 3px 0 3px 3px;
    border-top: 1px solid #999;
    background: #fff;
  }

  .note-btn {
    width: 30px;
    height: 30px;
  }

  .side__tail {
    width: 100%;
    height: 12px;
    margin-top: 2px;
    border-radius: 0 0 4px 4px;
    background:
      conic-gradient(from 234deg at 100% 50%, #000 72deg, transparent 0) 26px 3px / 3px 6px no-repeat,
      linear-gradient(#000, #000) 22px 3px / 1px 6px no-repeat,
      linear-gradient(90deg, #8e8e8e, #eee);
  }

  .canvas {
    position: relative;
    flex: 1;
    min-width: 0;
    margin: 0 1px 0 0;
    border: solid;
    border-width: 2px 1px 1px 2px;
    border-color: #777 #e0e0e0 #e0e0e0 #777;
    background: #fff;
  }

  .drawing__note {
    font-family: 'Open Sans Condensed Light', 'Roboto Condensed Light', 'Noto Sans ExtraCondensed Light', 'Noto Sans ExtraCondensed', 'Open Sans Condensed', sans-serif;
    font-size: 45px;
    font-style: italic;
    font-weight: 300;
  }

  .drawing__hint {
    font-family: 'Liberation Sans', sans-serif;
    font-size: 12px;
  }

  .drawing__axis {
    font-family: 'Liberation Sans', sans-serif;
    font-size: 13px;
    fill: #999;
  }

  .palette {
    position: absolute;
    top: 6px;
    left: 226px;
    padding: 1px;
    border: 2px solid #888;
    background: #fff;
  }

  .palette__head {
    display: flex;
    align-items: center;
    gap: 7px;
    height: 22px;
    padding: 0 2px;
    background: #888;
  }

  .palette__head h2 {
    flex: 1;
    margin: 0;
    font-size: 14px;
  }

  .palette__grid {
    display: flex;
    flex-wrap: wrap;
    align-items: center;
    width: 243px;
    background: linear-gradient(#fff, #f4f4f4 50%, #dedede);
  }

  .palette__tool {
    width: 30px;
    height: 34px;
  }

  .separator--palette {
    margin: 0 4px;
  }

  .props {
    display: flex;
    padding: 8px 6px 0 33px;
    height: 68px;
  }

  .grip--tall {
    width: 7px;
    height: 56px;
    background-position: 2px 0;
  }

  .props__side {
    display: flex;
    flex-wrap: wrap;
    align-content: flex-start;
    gap: 5px 4px;
    width: 45px;
    padding: 3px 0 0 3px;
    margin-right: 3px;
    background: linear-gradient(90deg, #fff, #dedede);
  }

  .props__body {
    flex: 1;
    min-width: 0;
  }

  .props__line {
    display: flex;
    align-items: center;
    height: 31px;
    padding: 3px 0 0 17px;
    border: solid #999;
    border-width: 1px 1px 2px 1px;
    border-bottom-color: #000;
    background: linear-gradient(#fff, #f0f0f0);
    box-shadow: inset 0 0 0 2px #e0e0e0;
  }

  .props__label {
    width: 112px;
    white-space: nowrap;
  }

  .field--point {
    width: 63px;
    margin-right: 1px;
  }

  .angle {
    display: flex;
    align-items: center;
    gap: 6px;
    height: 25px;
    padding-left: 1px;
    border: 1px solid #3b97f0;
    background: #dbeafa;
  }

  .props__place {
    margin-right: 6px;
  }

  .align {
    width: 20px;
    height: 20px;
    margin-right: 2px;
    border: 1px solid #bbb;
    background: #eee;
  }

  .align--active {
    border-color: #3b97f0;
    background: #dbeafa;
  }

  .props__tabs {
    height: 28px;
    padding-left: 1px;
    background: linear-gradient(#fff, #dedede);
  }

  .tab {
    gap: 8px;
    height: 25px;
    padding: 0 7px 0 5px;
    border: solid #000;
    border-width: 0 1px 1px 0;
    background: #fff;
  }

  .status {
    display: flex;
    align-items: center;
    height: 25px;
    padding-left: 6px;
    border-top: 1px solid #888;
    background: linear-gradient(#d8d4d3, #d8d4d3) right 86px top / 1px 100% no-repeat, #f0eceb;
  }

  .status p {
    margin: 0;
  }

  .taskbar {
    display: flex;
    align-items: center;
    height: 47px;
    border-top: 1px solid #30343e;
    background:
      linear-gradient(90deg, #08080a 114px, transparent 130px),
      linear-gradient(270deg, #050507 118px, transparent 132px),
      linear-gradient(100deg, #6f8098 0 58%, #64758f 60%, #74859c 70%, #667892 80%, #72839a);
    color: #fff;
    font-family: 'Open Sans', 'Noto Sans', sans-serif;
  }

  .start {
    width: 66px;
    margin-right: 3px;
    padding-bottom: 2px;
  }

  .pinned {
    width: 70px;
    height: 46px;
    padding-bottom: 2px;
  }

  .task {
    justify-content: flex-start;
    gap: 5px;
    width: 159px;
    height: 46px;
    margin-right: 3px;
    padding: 0 0 2px 9px;
    border: 1px solid #30384a;
    border-radius: 3px;
    background: linear-gradient(170deg, #c2c9d2 0, #98a4b3 45%, #7e8ca0 50%, #8794a8);
    box-shadow: inset 0 0 0 1px #b9c2cf;
    white-space: nowrap;
  }

  .pinned + .task {
    margin-left: 2px;
  }

  .task--active {
    background: linear-gradient(170deg, #e4e7ec 0, #bdc5cf 45%, #a2adbb 50%, #b4bac8);
    box-shadow: inset 0 0 0 1px #e4e8ee;
  }

  .tray {
    display: flex;
    align-items: center;
    align-self: stretch;
    gap: 10px;
    margin-left: auto;
  }

  .tray__lang {
    margin-right: 8px;
    padding-bottom: 4px;
    font-family: 'Liberation Sans', sans-serif;
  }

  .tray__more {
    margin-right: 6px;
  }

  .clock {
    display: flex;
    flex-direction: column;
    width: 76px;
    margin-left: 10px;
    font-size: 14px;
    line-height: 22px;
    text-align: center;
    white-space: nowrap;
  }

  .peek {
    align-self: stretch;
    width: 14px;
    border: 1px solid #777;
    background: linear-gradient(160deg, #555, #111 50%);
  }
</style>
